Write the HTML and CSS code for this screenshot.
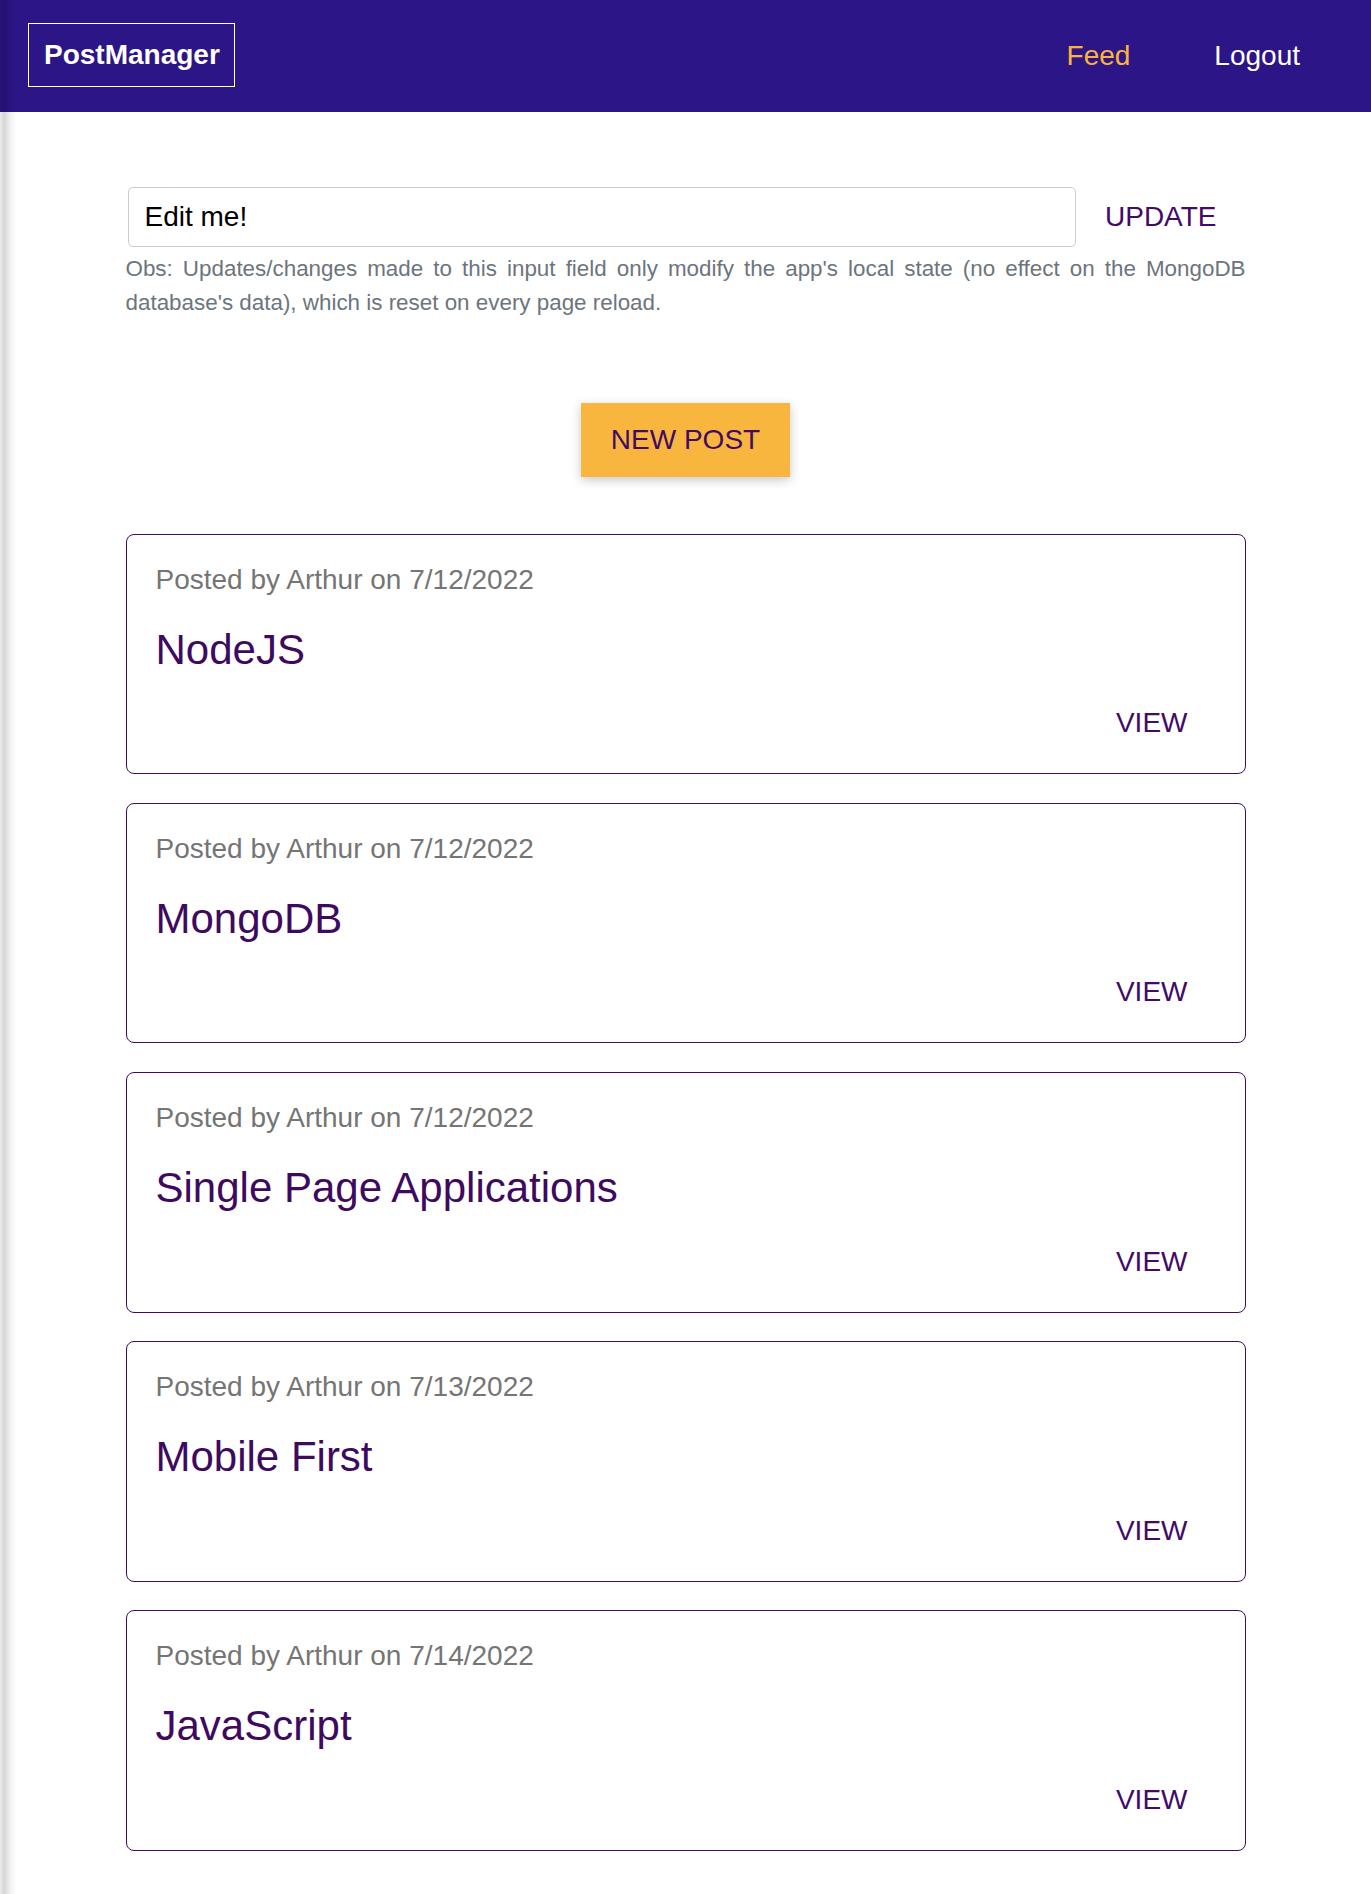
FILE: index.html
```html
<!DOCTYPE html>
<html lang="en">
<head>
<meta charset="utf-8">
<title>PostManager</title>
<link rel="stylesheet" href="styles.css">
</head>
<body>
<header class="topbar">
  <div class="logo">PostManager</div>
  <nav class="nav">
    <a class="nav-link nav-active" href="#">Feed</a>
    <a class="nav-link" href="#">Logout</a>
  </nav>
</header>
<main class="main">
  <section class="status">
    <div class="status-row">
      <input class="status-input" type="text" value="Edit me!">
      <button class="flat-btn">UPDATE</button>
    </div>
    <p class="status-note">Obs: Updates/changes made to this input field only modify the app's local state (no effect on the MongoDB database's data), which is reset on every page reload.</p>
  </section>
  <div class="new-post-wrap">
    <button class="new-post">NEW POST</button>
  </div>
  <section class="feed">
    <article class="post">
      <div class="post-meta">Posted by Arthur on 7/12/2022</div>
      <h2 class="post-title">NodeJS</h2>
      <div class="post-actions"><button class="flat-btn">VIEW</button></div>
    </article>
    <article class="post">
      <div class="post-meta">Posted by Arthur on 7/12/2022</div>
      <h2 class="post-title">MongoDB</h2>
      <div class="post-actions"><button class="flat-btn">VIEW</button></div>
    </article>
    <article class="post">
      <div class="post-meta">Posted by Arthur on 7/12/2022</div>
      <h2 class="post-title">Single Page Applications</h2>
      <div class="post-actions"><button class="flat-btn">VIEW</button></div>
    </article>
    <article class="post">
      <div class="post-meta">Posted by Arthur on 7/13/2022</div>
      <h2 class="post-title">Mobile First</h2>
      <div class="post-actions"><button class="flat-btn">VIEW</button></div>
    </article>
    <article class="post">
      <div class="post-meta">Posted by Arthur on 7/14/2022</div>
      <h2 class="post-title">JavaScript</h2>
      <div class="post-actions"><button class="flat-btn">VIEW</button></div>
    </article>
  </section>
</main>
</body>
</html>
```
FILE: styles.css
```css
* { box-sizing: border-box; }

html, body {
  margin: 0;
  padding: 0;
  background: #ffffff;
  font-family: "Liberation Sans", Arial, sans-serif;
}

body::before {
  content: "";
  position: fixed;
  top: 0;
  left: 0;
  bottom: 0;
  width: 18px;
  pointer-events: none;
  background: linear-gradient(to right, rgba(0,0,0,0.07) 0, rgba(0,0,0,0.16) 4px, rgba(0,0,0,0.06) 10px, rgba(0,0,0,0) 17px);
  z-index: 10;
}

.topbar {
  height: 112px;
  background: #2c1587;
  display: flex;
  align-items: center;
  justify-content: space-between;
  padding: 0 71px 0 28px;
}

.logo {
  border: 1px solid #ffffff;
  padding: 15px 14px 15px 15px;
  color: #ffffff;
  font-weight: bold;
  font-size: 28px;
  line-height: 32px;
  margin-top: -3px;
}

.nav {
  display: flex;
  gap: 84px;
}

.nav-link {
  color: #ffffff;
  font-size: 28px;
  line-height: 32px;
  text-decoration: none;
}

.nav-active { color: #f9b43c; }

.main {
  width: 1120px;
  margin: 0 auto;
  padding: 75px 0 43px;
}

.status-row {
  display: flex;
  align-items: center;
}

.status-input {
  flex: 1;
  height: 60px;
  margin-left: 2px;
  border: 1px solid #cccccc;
  border-radius: 5px;
  padding: 0 16px;
  font-family: "Liberation Sans", Arial, sans-serif;
  font-size: 28px;
  color: #000000;
  outline: none;
}

.flat-btn {
  background: transparent;
  border: none;
  padding: 6px 29px;
  font-family: "Liberation Sans", Arial, sans-serif;
  font-size: 28px;
  line-height: 32px;
  color: #430b66;
  cursor: pointer;
}

.status-note {
  margin: 5px 0 0;
  font-size: 22.4px;
  line-height: 34px;
  color: #6c757d;
  text-align: justify;
}

.new-post-wrap {
  display: flex;
  justify-content: center;
  margin-top: 83px;
}

.new-post {
  background: #f9b63f;
  border: none;
  padding: 21px 30px;
  font-family: "Liberation Sans", Arial, sans-serif;
  font-size: 28px;
  line-height: 32px;
  color: #430b66;
  box-shadow: 0 3px 10px rgba(0,0,0,0.22);
  cursor: pointer;
}

.feed {
  display: flex;
  flex-direction: column;
  gap: 28.5px;
  margin-top: 56.5px;
}

.post {
  border: 1px solid #420b63;
  border-radius: 8px;
  padding: 29px 28px 28px 29px;
}

.post-meta {
  font-size: 28px;
  line-height: 32px;
  color: #757575;
}

.post-title {
  margin: 30px 0 0;
  font-size: 42px;
  line-height: 47.7px;
  font-weight: normal;
  color: #3e0a5f;
}

.post-actions {
  display: flex;
  justify-content: flex-end;
  margin-top: 28px;
}
```
